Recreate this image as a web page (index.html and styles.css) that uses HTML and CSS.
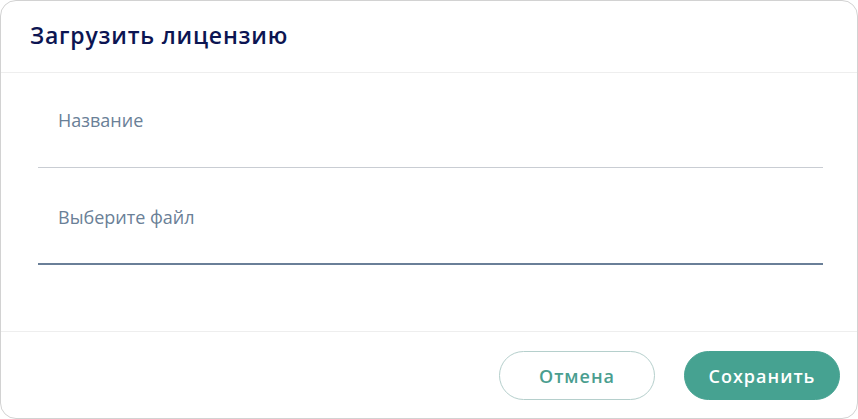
FILE: index.html
```html
<!DOCTYPE html>
<html lang="ru">
<head>
<meta charset="utf-8">
<link rel="stylesheet" href="styles.css">
</head>
<body>
<div class="dialog">
  <div class="dialog-header">
    <h2 class="dialog-title">Загрузить лицензию</h2>
  </div>
  <div class="dialog-body">
    <div class="field field-name">
      <span class="field-label">Название</span>
    </div>
    <div class="field field-file">
      <span class="field-label">Выберите файл</span>
    </div>
  </div>
  <div class="dialog-footer">
    <button class="btn btn-outline">Отмена</button>
    <button class="btn btn-primary">Сохранить</button>
  </div>
</div>
</body>
</html>
```
FILE: styles.css
```css
* { box-sizing: border-box; }
html, body { margin: 0; padding: 0; background: #ffffff; }
body { font-family: "Open Sans", "Noto Sans", sans-serif; }

.dialog {
  width: 858px;
  height: 419px;
  border: 1px solid #d2d2d2;
  border-radius: 16px;
  background: #fff;
  display: flex;
  flex-direction: column;
  overflow: hidden;
}

.dialog-header {
  height: 72px;
  border-bottom: 1px solid #eeeeee;
  display: flex;
  align-items: center;
  padding: 0 0 4px 29px;
}
.dialog-title {
  margin: 0;
  font-size: 23px;
  font-weight: 600;
  letter-spacing: 0.8px;
  color: #0c1552;
  line-height: 30px;
}

.dialog-body {
  flex: 1;
  padding: 0 34px 0 37px;
  border-bottom: 1px solid #eeeeee;
}

.field {
  padding-left: 20px;
}
.field-name {
  height: 95px;
  padding-top: 35px;
  border-bottom: 1px solid #c9cdd3;
}
.field-file {
  height: 97px;
  padding-top: 37px;
  border-bottom: 2px solid #6a7f98;
}
.field-label {
  display: block;
  font-size: 18px;
  line-height: 24px;
  color: #6a8097;
}

.dialog-footer {
  height: 86px;
  display: flex;
  justify-content: flex-end;
  align-items: flex-start;
  gap: 29px;
  padding: 19px 17px 0 0;
}

.btn {
  width: 156px;
  height: 49px;
  border-radius: 25px;
  font-family: "Open Sans", "Noto Sans", sans-serif;
  font-size: 18px;
  font-weight: 600;
  letter-spacing: 1px;
  cursor: pointer;
}
.btn-outline {
  background: #fff;
  border: 1px solid #b5cfcc;
  color: #4a9e8f;
}
.btn-primary {
  background: #46a291;
  border: 1px solid #46a291;
  color: #fff;
}
```
